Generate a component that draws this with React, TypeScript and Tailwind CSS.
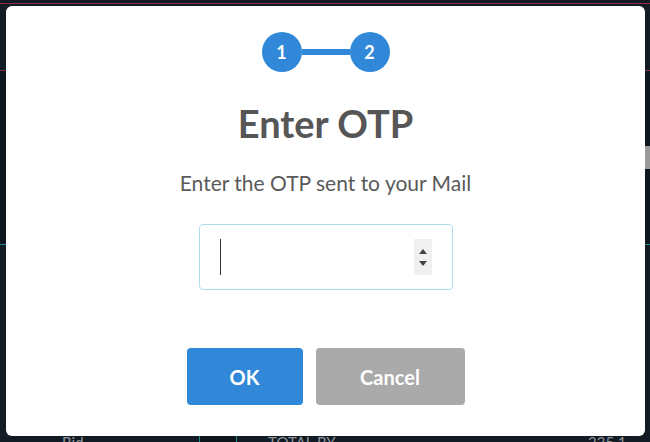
import React from "react";

export default function App() {
  return (
    <div className="relative w-[650px] h-[442px] overflow-hidden bg-[#121b24] font-['Lato',sans-serif]">
      {/* background page */}
      <div className="flex h-full flex-col">
        <div className="h-[3px] bg-[#111a22]" />
        <div className="h-px bg-[#8b3046]" />
        <div className="flex flex-1 flex-col">
          <div className="h-[66px] bg-[#131c25]" />
          <div className="h-px bg-[#8b3046]" />
          <div className="flex h-[173px] flex-col justify-center bg-[#0f171e]">
            <div className="ml-auto h-[23px] w-[6px] bg-[#9a9a9a]" />
          </div>
          <div className="h-px bg-[#1f8a8a]" />
          <div className="flex-1 bg-[#131c25]" />
          <div className="flex h-[6px] items-start text-[15px] leading-none text-[#8e959c]">
            <div className="w-[62px]" />
            <div className="w-[137px] -mt-[1px]">Bid</div>
            <div className="h-full w-px bg-[#1f8a8a]" />
            <div className="h-full w-[36px] bg-[#0e151b]" />
            <div className="h-full w-px bg-[#1f8a8a]" />
            <div className="w-[31px]" />
            <div className="w-[320px] -mt-[1px]">TOTAL BY</div>
            <div className="-mt-[1px]">235.1</div>
          </div>
        </div>
      </div>

      {/* modal */}
      <div className="absolute left-[6px] top-[6px] flex h-[430px] w-[639px] flex-col items-center rounded-[6px] bg-white">
        {/* stepper */}
        <div className="mt-[26px] flex items-center">
          <div className="flex h-[40px] w-[40px] items-center justify-center rounded-full bg-[#3187d8] text-[18px] font-bold text-white">
            1
          </div>
          <div className="h-[6px] w-[48px] bg-[#3187d8]" />
          <div className="flex h-[40px] w-[40px] items-center justify-center rounded-full bg-[#3187d8] text-[18px] font-bold text-white">
            2
          </div>
        </div>

        <h1 className="mt-[28px] text-[38px] font-bold leading-[46px] text-[#565656]">
          Enter OTP
        </h1>

        <p className="mt-[24px] text-[21px] leading-[26px] text-[#5a5a5a]">
          Enter the OTP sent to your Mail
        </p>

        <div className="mt-[28px] flex h-[66px] w-[254px] items-center rounded-[4px] border border-[#b0dcef] pl-[20px] pr-[20px]">
          <div className="h-[36px] w-px bg-[#333]" />
          <div className="ml-auto flex h-[36px] w-[18px] flex-col items-center justify-center gap-[7px] bg-[#f0f0f0]">
            <svg width="8" height="5" viewBox="0 0 8 5">
              <path d="M0 5 L4 0 L8 5 Z" fill="#444" />
            </svg>
            <svg width="8" height="5" viewBox="0 0 8 5">
              <path d="M0 0 L8 0 L4 5 Z" fill="#444" />
            </svg>
          </div>
        </div>

        <div className="mt-[58px] flex gap-[13px]">
          <button className="h-[57px] w-[116px] rounded-[4px] bg-[#3187d8] text-[20px] font-bold text-white">
            OK
          </button>
          <button className="h-[57px] w-[149px] rounded-[4px] bg-[#aaaaaa] text-[20px] font-bold text-white">
            Cancel
          </button>
        </div>
      </div>
    </div>
  );
}
